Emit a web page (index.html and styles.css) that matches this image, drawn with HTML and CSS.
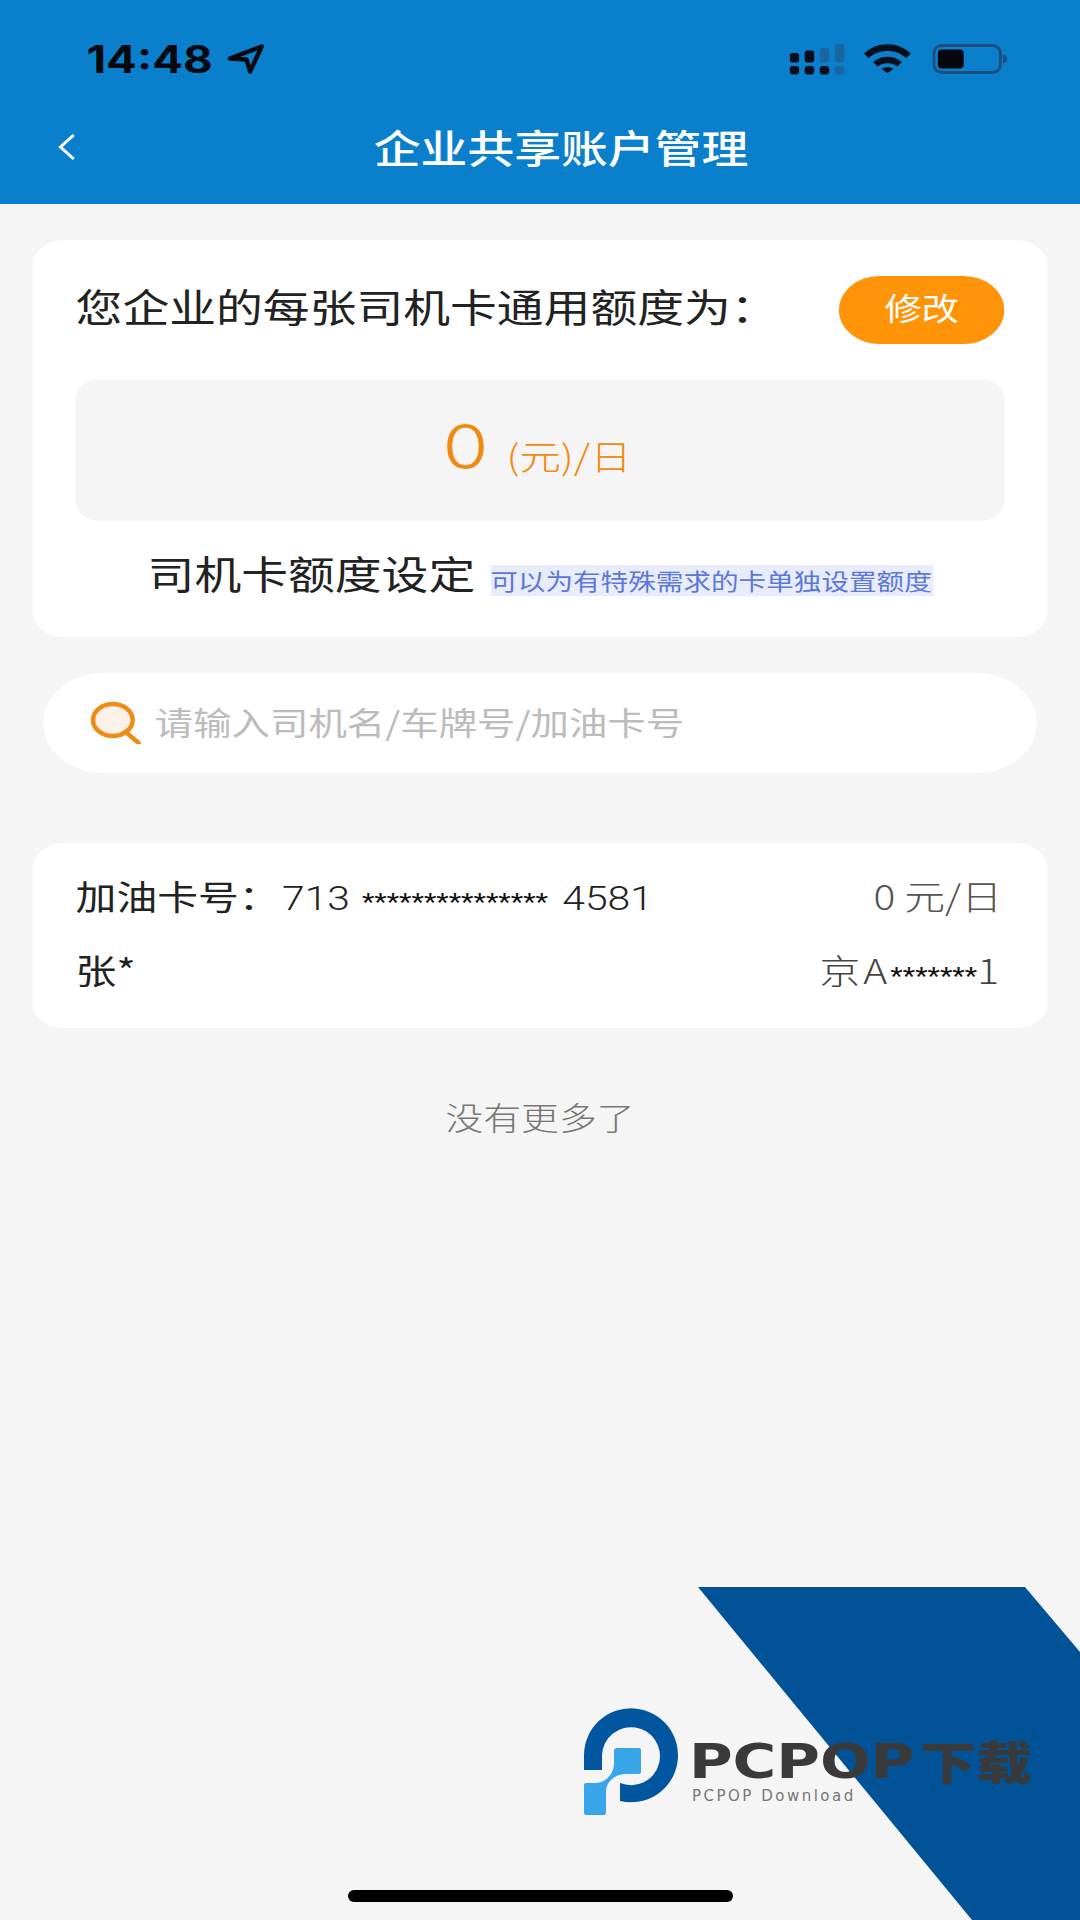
FILE: index.html
```html
<!DOCTYPE html>
<html lang="zh-CN">
<head>
<meta charset="utf-8">
<title>企业共享账户管理</title>
<link rel="stylesheet" href="styles.css">
</head>
<body>
<div class="screen">
  <div class="stretch">
    <header class="header">
      <div class="status">
        <div class="status-left">
          <span class="time">14:48</span>
          <svg class="loc" width="32" height="30" viewBox="0 0 38 30" preserveAspectRatio="none"><path d="M3 14.500 34.500 2.500 23 27.500 19.500 15.500Z" fill="none" stroke="#06090f" stroke-width="4.400" stroke-linejoin="round"/></svg>
        </div>
        <div class="status-right">
          <svg width="46" height="31" viewBox="0 0 55 31" preserveAspectRatio="none">
            <g fill="#06101c">
              <rect x="0" y="9" width="9.500" height="9.500" rx="3"/><rect x="15" y="6.500" width="9.500" height="12" rx="3"/>
              <rect x="0" y="22" width="9.500" height="8.500" rx="3"/><rect x="15" y="22" width="9.500" height="8.500" rx="3"/><rect x="30" y="22" width="9.500" height="8.500" rx="3"/>
            </g>
            <g fill="#1a66a3">
              <rect x="30" y="4" width="9.500" height="14.500" rx="3"/><rect x="45" y="0" width="9.500" height="18.500" rx="3"/><rect x="45" y="22" width="9.500" height="8.500" rx="3"/>
            </g>
          </svg>
          <svg class="wifi" width="39" height="29" viewBox="0 0 47 29" preserveAspectRatio="none">
            <path d="M0 9.500C13 -3 34 -3 47 9.500L42.500 14C32 4.500 15 4.500 4.500 14Z" fill="#06101c"/>
            <path d="M9 18C17 11 30 11 38 18L33.500 22.500C28 18 19 18 13.500 22.500Z" fill="#06101c"/>
            <path d="M17.500 25C21 22.500 26 22.500 29.500 25L23.500 29Z" fill="#06101c"/>
          </svg>
          <svg class="battery" width="63" height="30" viewBox="0 0 76 30" preserveAspectRatio="none">
            <rect x="1.500" y="1.500" width="67" height="27" rx="8" fill="none" stroke="#1c4f80" stroke-width="3"/>
            <rect x="5.500" y="5.500" width="26" height="19" rx="4" fill="#05070c"/>
            <path d="M71 10C74 11 75 13 75 15S74 19 71 20Z" fill="#1c4f80"/>
          </svg>
        </div>
      </div>
      <div class="nav">
        <svg class="back" width="17" height="28" viewBox="0 0 20 28" preserveAspectRatio="none"><path d="M17 2 4 14 17 26" fill="none" stroke="#fff" stroke-width="3"/></svg>
        <h1 class="title">企业共享账户管理</h1>
      </div>
    </header>

    <main class="main">
      <section class="card quota">
        <div class="quota-top">
          <span class="quota-label">您企业的每张司机卡通用额度为：</span>
          <button class="edit">修改</button>
        </div>
        <div class="amount">
          <span class="amount-num">0</span>
          <span class="amount-unit">(元)/日</span>
        </div>
        <div class="setting">
          <span class="setting-title">司机卡额度设定</span>
          <span class="setting-note">可以为有特殊需求的卡单独设置额度</span>
        </div>
      </section>

      <div class="search">
        <svg class="search-icon" width="43" height="42" viewBox="0 0 52 42" preserveAspectRatio="none">
          <ellipse cx="23" cy="18" rx="20" ry="16" fill="#fbf1e6" stroke="#f08c14" stroke-width="4.500"/>
          <path d="M36 30 49 41" stroke="#f08c14" stroke-width="4.500" stroke-linecap="round"/>
        </svg>
        <span class="search-text">请输入司机名/车牌号/加油卡号</span>
      </div>

      <section class="card driver">
        <div class="row">
          <span class="card-no">加油卡号：<span class="digits">713</span><span class="stars">***************</span><span class="digits">4581</span></span>
          <span class="limit">0 元/日</span>
        </div>
        <div class="row row-two">
          <span class="name">张*</span>
          <span class="plate">京A<span class="stars-dark">*******</span>1</span>
        </div>
      </section>

      <p class="end">没有更多了</p>
    </main>
  </div>

  <div class="watermark">
    <svg class="wm-shape" width="382" height="333" viewBox="0 0 382 333"><path d="M0 0H327L382 65V333H274Z" fill="#015296"/></svg>
    <svg class="wm-mark" width="120" height="120" viewBox="0 0 120 120">
      <path d="M9 70V55A47 47 0 1 1 45 101V83A29 29 0 1 0 27 55V70Z" fill="#01569f"/>
      <path d="M42 48H64Q66 48 66 50V72Q66 74 64 74H50C41 74 31 81 31 92V113Q31 115 29 115H11Q9 115 9 113V85Q9 83 11 83H20C31 83 39 74 39 63V51Q39 48 42 48Z" fill="#38a6e8"/>
    </svg>
    <div class="wm-brand"><span class="wm-latin">PCPOP</span><span class="wm-cjk">下载</span></div>
    <div class="wm-sub">PCPOP Download</div>
  </div>

  <div class="home"></div>
</div>
</body>
</html>
```
FILE: styles.css
```css
* { box-sizing: border-box; }
html, body { margin: 0; padding: 0; }
body { font-family: "Noto Sans CJK SC", "Noto Sans", sans-serif; background: #f5f5f5; }
.screen { position: relative; width: 1080px; height: 1920px; overflow: hidden; background: #f5f5f5; }
/* The reference is a phone capture squeezed to 1080x1920: every glyph and corner is 1.2x wider than tall. */
.stretch { width: 900px; height: 1920px; transform: scaleX(1.2); transform-origin: 0 0; }

.header { height: 204px; background: #0a7fcb; display: flex; flex-direction: column; }
.status { height: 118px; padding: 44px 60px 0 72px; display: flex; justify-content: space-between; align-items: flex-start; }
.status-left { display: flex; align-items: center; height: 30px; gap: 12px; }
.time { font-family: Inter, sans-serif; font-weight: 700; font-size: 38px; line-height: 30px; color: #06090f; }
.status-right { display: flex; align-items: flex-start; gap: 16px; }
.status-right .battery { margin-left: 2px; }

.nav { position: relative; flex: 1; display: flex; align-items: center; justify-content: center; padding: 0 0 30px 35px; }
.back { position: absolute; left: 47px; top: 15px; }
.title { margin: 0; font-size: 39px; font-weight: 500; line-height: 54px; color: #fff; }

.main { padding: 36px 27px 0; }
.card { background: #fff; border-radius: 26px; }
.quota { height: 397px; padding: 36px 36px 0; }
.quota-top { display: flex; justify-content: space-between; align-items: center; height: 68px; }
.quota-label { font-size: 39px; line-height: 60px; color: #222; margin-top: -10px; white-space: nowrap; }
.edit { width: 138px; height: 68px; border: 0; border-radius: 34px; background: #ff9408; color: #fff; font: inherit; font-size: 31px; padding: 0 0 8px; }
.amount { margin-top: 35px; height: 142px; background: #f5f5f5; border-radius: 20px; display: flex; justify-content: center; align-items: center; gap: 15px; color: #f28a12; }
.amount-num { font-family: Inter, sans-serif; font-weight: 300; font-size: 62px; line-height: 70px; margin-top: -6px; }
.amount-unit { font-size: 34.500px; font-weight: 300; line-height: 50px; margin: 10px 5px 0 0; }
.setting { margin-top: 22px; display: flex; align-items: flex-start; padding-left: 60px; gap: 12.500px; }
.setting-title { font-size: 39px; line-height: 58px; color: #222; white-space: nowrap; }
.setting-note { margin-top: 22px; width: 369px; height: 31px; background: #e9edfb; color: #5c78d8; font-size: 23px; line-height: 31px; white-space: nowrap; }

.search { margin: 36px 9px 0; height: 100px; border-radius: 50px; background: #fff; display: flex; align-items: center; padding-left: 39px; gap: 11px; }
.search-icon { flex: none; }
.search-text { font-size: 32px; color: #bcbcbc; line-height: 50px; white-space: nowrap; margin-top: -4px; }

.driver { margin-top: 70px; height: 185px; padding: 26px 36px 0; }
.row { display: flex; justify-content: space-between; align-items: center; height: 60px; }
.row-two { margin-top: 10px; }
.card-no { font-size: 34px; color: #222; white-space: nowrap; line-height: 60px; }
.digits { font-family: Roboto, sans-serif; font-weight: 300; font-size: 34px; margin-left: 2px; }
.stars { font-family: Roboto, sans-serif; font-size: 24px; color: #111; margin: 0 10px; }
.limit { font-size: 34px; font-weight: 300; color: #555; margin: -8px 2px 0 0; }
.name { font-size: 34px; color: #222; }
.plate { font-size: 34px; font-weight: 300; color: #444; margin-right: 2px; letter-spacing: 2.500px; }
.stars-dark { font-family: Roboto, sans-serif; font-size: 24px; font-weight: 400; color: #111; letter-spacing: 0; }
.end { margin: 58px 0 0; text-align: center; font-size: 31.500px; font-weight: 300; line-height: 60px; color: #777; }

.watermark { position: absolute; left: 0; top: 0; width: 1080px; height: 1920px; pointer-events: none; }
.wm-shape { position: absolute; left: 698px; top: 1587px; }
.wm-mark { position: absolute; left: 575px; top: 1700px; }
.wm-brand { position: absolute; left: 689px; top: 1735px; display: flex; align-items: center; height: 52px; color: #3a3a3a; white-space: nowrap; transform: scaleX(1.24); transform-origin: 0 0; }
.wm-latin { font-family: "DejaVu Sans", sans-serif; font-weight: 700; font-size: 48px; line-height: 52px; }
.wm-cjk { font-weight: 900; font-size: 45px; line-height: 52px; margin-left: 5px; }
.wm-sub { position: absolute; left: 692px; top: 1788px; font-family: "DejaVu Sans", sans-serif; font-size: 15px; letter-spacing: 2.500px; line-height: 16px; color: #777; white-space: nowrap; }

.home { position: absolute; left: 348px; top: 1890px; width: 385px; height: 12px; border-radius: 6px; background: #000; }
```
